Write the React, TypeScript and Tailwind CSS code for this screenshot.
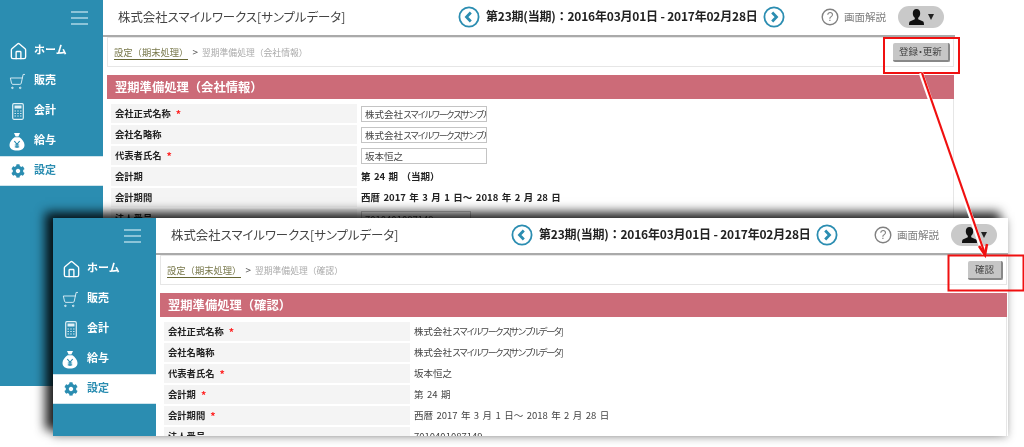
import React from "react";
import { House, ShoppingCart } from "lucide-react";
import { FaCog } from "react-icons/fa";

const Bag = () => (
  <svg width="16" height="19" viewBox="0 0 16 19">
    <path d="M5 1h6l-1.600 3.600h-2.800z M5.600 5.200h4.800C13 7 15.500 10 15.500 13c0 3.600-3 5.600-7.500 5.600S.5 16.600.5 13c0-3 2.500-6 5.100-7.800z" fill="#fff" />
    <path d="M5.300 9l2.700 3.400L10.700 9M8 12.400V16M5.800 13h4.400M5.800 14.800h4.400" fill="none" stroke="#2b8db1" strokeWidth="1.200" />
  </svg>
);

const Calc = () => (
  <svg width="12" height="17" viewBox="0 0 12 17">
    <rect x="0.700" y="0.700" width="10.600" height="15.600" rx="1.200" fill="none" stroke="#dff0f6" strokeWidth="1.200" />
    <rect x="2.500" y="2.500" width="7" height="3" fill="#dff0f6" />
    <path d="M2.500 8h7M2.500 10.500h7M2.500 13h7" stroke="#dff0f6" strokeWidth="1.200" strokeDasharray="1.400 1.400" />
  </svg>
);

const Circle = ({ dir }: { dir: "l" | "r" }) => (
  <svg width="22" height="22" viewBox="0 0 22 22">
    <circle cx="11" cy="11" r="9.600" fill="#fff" stroke="#2b8db1" strokeWidth="1.800" />
    <path d={dir === "l" ? "M12.800 6.500L8.500 11l4.300 4.500" : "M9.200 6.500L13.500 11l-4.300 4.500"} fill="none" stroke="#2b8db1" strokeWidth="2.800" />
  </svg>
);

const Person = () => (
  <svg width="15" height="16" viewBox="0 0 15 16">
    <path d="M7.500 0C5 0 3.800 1.800 3.800 4.200c0 2 .8 3.600 2 4.500v1.500L.8 12.500C.2 13 0 14.500 0 16h15c0-1.500-.2-3-.8-3.500l-5-2.300V8.700c1.200-.9 2-2.500 2-4.500C11.200 1.800 10 0 7.500 0z" fill="#111" />
  </svg>
);

const nav = [
  { label: "ホーム", icon: <House size={19} strokeWidth={1.7} color="#fff" /> },
  { label: "販売", icon: <ShoppingCart size={17} strokeWidth={1.300} color="#dff0f6" className="-scale-x-100" /> },
  { label: "会計", icon: <span className="pl-[3px]"><Calc /></span> },
  { label: "給与", icon: <Bag /> },
];

type Row = { label: string; req?: boolean; value: React.ReactNode };

const Co = () => (
  <>
    株式会社
    <span className="text-[9px] tracking-[-1.8px]">スマイルワークス[サンプルデータ]</span>
  </>
);

const Input = ({ children, w = "w-[126px]" }: { children: React.ReactNode; w?: string }) => (
  <div className={`${w} h-[16px] border border-[#c4c4c4] bg-white px-[3px] text-[9.500px] leading-[14px] text-[#444] overflow-hidden whitespace-nowrap`}>
    {children}
  </div>
);

function Win({ className, band, crumb, btn, btnW, rows }: { className: string; band: string; crumb: string; btn: string; btnW: string; rows: Row[] }) {
  return (
    <div className={`absolute flex w-[955px] overflow-hidden bg-white ${className}`}>
      <aside className="w-[103px] shrink-0 bg-[#2b8db1] flex flex-col">
        <div className="h-[36px] flex flex-col items-end justify-center gap-[4.500px] pr-[15px]">
          <span className="block w-[17px] h-[1.500px] bg-[#8cc4d8]" />
          <span className="block w-[17px] h-[1.500px] bg-[#8cc4d8]" />
          <span className="block w-[17px] h-[1.500px] bg-[#8cc4d8]" />
        </div>
        {nav.map((n) => (
          <div key={n.label} className="h-[30px] flex items-center text-white font-bold text-[11px]">
            <span className="w-[34px] pl-[9px] flex justify-start">{n.icon}</span>
            <span className="-mt-[3px]">{n.label}</span>
          </div>
        ))}
        <div className="h-[30px] flex items-center bg-white text-[#2b8db1] font-bold text-[11px] border-y border-[#cfe4ec]">
          <span className="w-[34px] pl-[11px]"><FaCog size={14} color="#2b8db1" /></span>
          <span className="-mt-[3px]">設定</span>
        </div>
      </aside>
      <main className="flex-1 flex flex-col min-w-0">
        <header className="h-[37px] shrink-0 flex items-center border-b-2 border-[#aaaaaa] pl-[15px] pb-[1px]">
          <div className="w-[340px] text-[12.400px] text-[#444] whitespace-nowrap [font-feature-settings:'palt']">株式会社スマイルワークス[サンプルデータ]</div>
          <Circle dir="l" />
          <div className="w-[272px] ml-[6px] mr-[5px] text-[12px] font-bold text-[#222] whitespace-nowrap -mt-[2px] tracking-[-0.2px]">第23期(当期)：2016年03月01日 - 2017年02月28日</div>
          <Circle dir="r" />
          <svg width="18" height="18" viewBox="0 0 18 18" className="ml-[36px]">
            <circle cx="9" cy="9" r="7.800" fill="none" stroke="#808080" strokeWidth="1.400" />
            <text x="9" y="13" textAnchor="middle" fontSize="12" fill="#808080" fontFamily="Liberation Sans">?</text>
          </svg>
          <span className="ml-[5px] text-[10.500px] text-[#808080] whitespace-nowrap">画面解説</span>
          <div className="ml-[12px] w-[46px] h-[22px] rounded-full bg-[#c9c9c9] flex items-center justify-center gap-[4px]">
            <Person />
            <span className="w-0 h-0 border-x-[3.500px] border-x-transparent border-t-[6px] border-t-[#222]" />
          </div>
        </header>
        <div className="ml-[4px] mr-[1px] h-[30px] shrink-0 border border-[#e6e6e6] flex items-center justify-between pl-[6px] pr-[3px]">
          <div className="whitespace-nowrap text-[9.300px]">
            <span className="text-[#77774a] border-b border-[#666633]">設定（期末処理）</span>
            <span className="text-[#555] mx-[4px] text-[10px]">&gt;</span>
            <span className="text-[#aaa] text-[8.800px]">{crumb}</span>
          </div>
          <div className={`${btnW} h-[19px] bg-[#c6c6c6] border-r-2 border-b-2 border-[#888] rounded-[2px] flex items-center justify-center text-[9.500px] text-[#444] whitespace-nowrap [font-feature-settings:'palt']`}>{btn}</div>
        </div>
        <div className="ml-[4px] mr-[1px] mt-[8px] h-[24px] shrink-0 bg-[#cc6b78] pl-[8px] flex items-center text-white font-bold text-[12.300px]">{band}</div>
        <div className="ml-[4px] mr-[1px] flex-1 border-r border-[#e6e6e6] pl-[4px] pt-[5px] flex flex-col gap-[2px]">
          {rows.map((r) => (
            <div key={r.label} className="flex h-[19px] shrink-0 items-center gap-[4px]">
              <div className="w-[246px] h-full bg-[#f4f4f4] pl-[4px] flex items-center gap-[5px] text-[9.300px] font-bold text-[#222] whitespace-nowrap">
                {r.label}
                {r.req && <span className="text-[#f22] font-bold text-[10.500px]">*</span>}
              </div>
              <div className="flex-1 text-[9.500px] text-[#444] whitespace-nowrap [word-spacing:1.300px]">{r.value}</div>
            </div>
          ))}
        </div>
      </main>
    </div>
  );
}

const B = ({ children }: { children: React.ReactNode }) => <span className="font-bold text-[#222]">{children}</span>;

const rowsA: Row[] = [
  { label: "会社正式名称", req: true, value: <Input><Co /></Input> },
  { label: "会社名略称", value: <Input><Co /></Input> },
  { label: "代表者氏名", req: true, value: <Input>坂本恒之</Input> },
  { label: "会計期", value: <B>第 24 期 （当期）</B> },
  { label: "会計期間", value: <B>西暦 2017 年 3 月 1 日～ 2018 年 2 月 28 日</B> },
  { label: "法人番号", value: <Input w="w-[110px]">7010401087149</Input> },
];
const rowsB: Row[] = [
  { label: "会社正式名称", req: true, value: <Co /> },
  { label: "会社名略称", value: <Co /> },
  { label: "代表者氏名", req: true, value: "坂本恒之" },
  { label: "会計期", req: true, value: "第 24 期" },
  { label: "会計期間", req: true, value: "西暦 2017 年 3 月 1 日～ 2018 年 2 月 28 日" },
  { label: "法人番号", value: "7010401087149" },
];

export default function App() {
  return (
    <div className="relative w-[1024px] h-[447px] overflow-hidden bg-white blur-[0.4px]" style={{ fontFamily: '"Noto Sans CJK JP", "Liberation Sans", sans-serif' }}>
      <Win className="left-0 top-0 h-[386px]" band="翌期準備処理（会社情報）" crumb="翌期準備処理（会社情報）" btn="登録・更新" btnW="w-[57px]" rows={rowsA} />
      <Win className="left-[53px] top-[218px] h-[218px] shadow-[-8px_-6px_10px_rgba(0,0,0,0.85),0_2px_8px_rgba(0,0,0,0.25)]" band="翌期準備処理（確認）" crumb="翌期準備処理（確認）" btn="確認" btnW="w-[35px]" rows={rowsB} />
      <svg className="absolute left-0 top-0 pointer-events-none" width="1024" height="447" viewBox="0 0 1024 447">
        <rect x="884" y="38" width="75" height="35" fill="none" stroke="#f01010" strokeWidth="2" />
        <rect x="948.500" y="255.500" width="75" height="35" fill="none" stroke="#f01010" strokeWidth="2" />
        <line x1="921" y1="73" x2="984" y2="254" stroke="#fff" strokeWidth="4.500" />
        <line x1="922" y1="73" x2="985" y2="254" stroke="#f01010" strokeWidth="2.200" />
        <path d="M979 246L985 255L987 244" fill="none" stroke="#f01010" strokeWidth="2.500" />
      </svg>
    </div>
  );
}
